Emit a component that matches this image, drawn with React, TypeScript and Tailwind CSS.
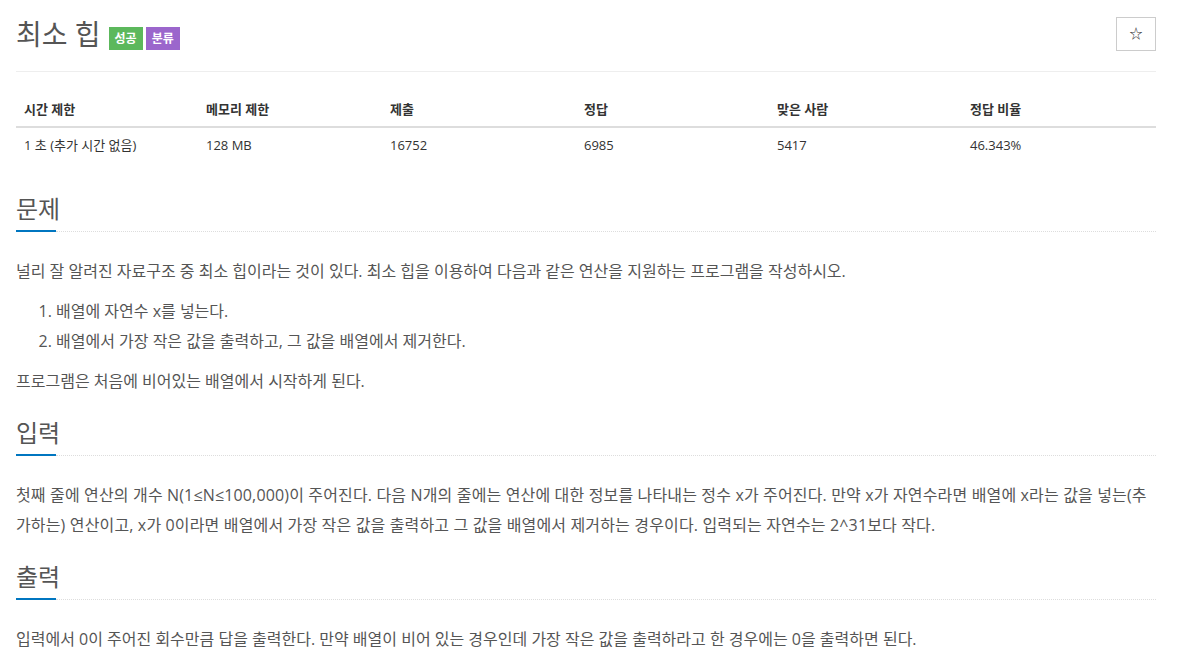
const font = { fontFamily: '"Open Sans", "Noto Sans CJK KR", sans-serif' }

const stats = [
  { label: '시간 제한', value: '1 초 (추가 시간 없음)', w: 'w-[182px]' },
  { label: '메모리 제한', value: '128 MB', w: 'w-[184px]' },
  { label: '제출', value: '16752', w: 'w-[194px]' },
  { label: '정답', value: '6985', w: 'w-[193px]' },
  { label: '맞은 사람', value: '5417', w: 'w-[193px]' },
  { label: '정답 비율', value: '46.343%', w: '' },
]

function SectionHeader({ title, className }: { title: string; className: string }) {
  return (
    <div className={className}>
      <h2 className="text-[24px] leading-[34px] text-[#555]">{title}</h2>
      <div className="flex mt-[4px]">
        <div className="w-10 h-[2px] bg-[#0076c0]" />
        <div className="flex-1 border-b border-dotted border-[#ddd] h-[2px]" />
      </div>
    </div>
  )
}

export default function App() {
  return (
    <div className="bg-white min-h-screen text-[#555]" style={font}>
      <div className="w-[1140px] ml-4">
        {/* header */}
        <div className="flex items-center justify-between pt-[17px] pb-[20px] border-b border-[#eee]">
          <div className="flex items-end gap-2">
            <h1 className="text-[28px] leading-[34px] text-[#555]">최소 힙</h1>
            <div className="flex gap-[3px] mb-[1px]">
              <span className="bg-[#5cb85c] text-white text-[12px] font-bold px-[6px] leading-[23px]">성공</span>
              <span className="bg-[#9b66cc] text-white text-[12px] font-bold px-[6px] leading-[23px]">분류</span>
            </div>
          </div>
          <button className="w-10 h-[34px] border border-[#ccc] flex items-center justify-center text-[13px] text-[#333]">
            ☆
          </button>
        </div>

        {/* stats table */}
        <table className="w-full mt-[20px] text-[13px] text-left table-fixed">
          <thead>
            <tr className="border-b-2 border-[#ddd]">
              {stats.map((s) => (
                <th key={s.label} className={`${s.w} px-2 py-2 leading-[18px] font-bold text-[#333]`}>{s.label}</th>
              ))}
            </tr>
          </thead>
          <tbody>
            <tr>
              {stats.map((s) => (
                <td key={s.label} className="px-2 py-2 leading-[18px] text-[#333]">{s.value}</td>
              ))}
            </tr>
          </tbody>
        </table>

        <SectionHeader title="문제" className="mt-[30px]" />
        <div className="text-[16px] leading-[30px] mt-[24px]">
          <p>널리 잘 알려진 자료구조 중 최소 힙이라는 것이 있다. 최소 힙을 이용하여 다음과 같은 연산을 지원하는 프로그램을 작성하시오.</p>
          <ol className="list-decimal pl-10 mt-[10px] mb-[10px]">
            <li>배열에 자연수 x를 넣는다.</li>
            <li>배열에서 가장 작은 값을 출력하고, 그 값을 배열에서 제거한다.</li>
          </ol>
          <p>프로그램은 처음에 비어있는 배열에서 시작하게 된다.</p>
        </div>

        <SectionHeader title="입력" className="mt-[20px]" />
        <div className="text-[16px] leading-[30px] mt-[24px] tracking-[0.15px]">
          <p>첫째 줄에 연산의 개수 N(1≤N≤100,000)이 주어진다. 다음 N개의 줄에는 연산에 대한 정보를 나타내는 정수 x가 주어진다. 만약 x가 자연수라면 배열에 x라는 값을 넣는(추가하는) 연산이고, x가 0이라면 배열에서 가장 작은 값을 출력하고 그 값을 배열에서 제거하는 경우이다. 입력되는 자연수는 2^31보다 작다.</p>
        </div>

        <SectionHeader title="출력" className="mt-[20px]" />
        <div className="text-[16px] leading-[30px] mt-[24px]">
          <p>입력에서 0이 주어진 회수만큼 답을 출력한다. 만약 배열이 비어 있는 경우인데 가장 작은 값을 출력하라고 한 경우에는 0을 출력하면 된다.</p>
        </div>
      </div>
    </div>
  )
}
